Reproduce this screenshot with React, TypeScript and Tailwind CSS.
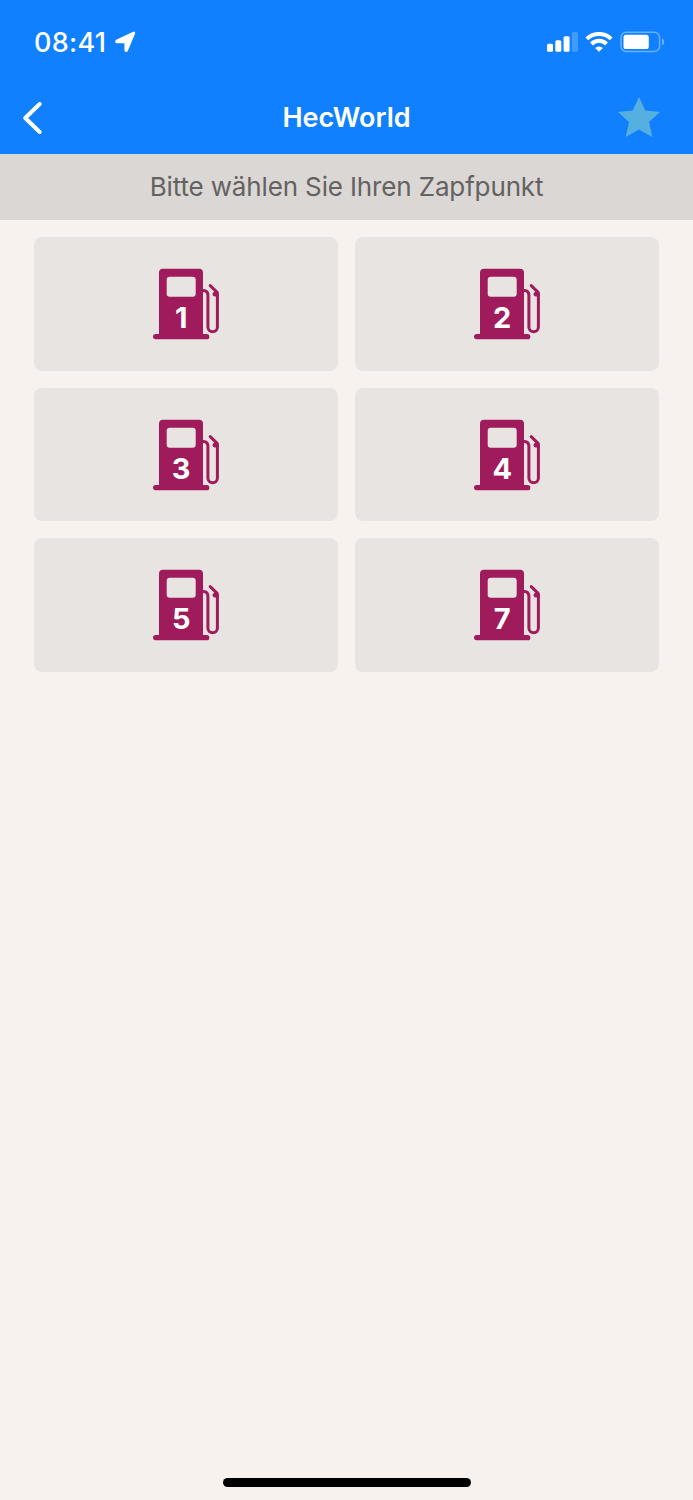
const pumps = [1, 2, 3, 4, 5, 7];

function LocationArrow() {
  return (
    <svg width="22" height="22" viewBox="0 0 22 22" className="ml-[7.5px] fill-white stroke-white" strokeLinejoin="round">
      <path d="M19.800 2L12.600 19.300Q12 20 11.800 19.100V11.200Q11.700 10.800 11.100 10.800H3Q2.100 10.600 2.800 10.100z" strokeWidth="2.800" />
    </svg>
  );
}

function SignalBars() {
  return (
    <svg width="31" height="20" viewBox="0 0 31 20" className="fill-white">
      <rect x="0" y="11.700" width="6" height="8" rx="1.500" />
      <rect x="8.300" y="8.200" width="6" height="11.500" rx="1.500" />
      <rect x="16.600" y="4.200" width="6" height="15.500" rx="1.500" />
      <rect x="24.900" y="0" width="6" height="19.700" rx="1.500" fill="#3f9dff" />
    </svg>
  );
}

function Wifi() {
  return (
    <svg width="28" height="20" viewBox="0 0 28 20" className="ml-[7px] fill-none stroke-white">
      <path d="M1.800 6.900a17.500 17.500 0 0 1 24.400 0" strokeWidth="4" />
      <path d="M6.500 12a10.500 10.500 0 0 1 15 0" strokeWidth="4" />
      <path d="M14 19.700l3.900-3.600a5.600 5.600 0 0 0-7.800 0z" fill="white" stroke="none" />
    </svg>
  );
}

function Battery() {
  return (
    <svg width="45" height="22" viewBox="0 0 45 22" className="ml-[7px]">
      <rect x="1" y="1.200" width="38.600" height="19.300" rx="5.300" fill="none" stroke="#69b1ff" strokeWidth="1.500" />
      <rect x="3.500" y="3.800" width="25.300" height="14.200" rx="2.600" fill="white" />
      <path d="M42 7.600c1.500.6 2.200 1.800 2.200 3.300s-.7 2.700-2.200 3.300z" fill="#69b1ff" />
    </svg>
  );
}

function PumpIcon({ label }: { label: number }) {
  return (
    <svg width="67" height="72" viewBox="0 -0.8 67 72">
      <path
        d="M10 0h36a4 4 0 0 1 4 4v61.200h3.700a2.600 2.600 0 0 1 0 5.300H2.600a2.600 2.600 0 0 1 0-5.300H6V4a4 4 0 0 1 4-4z"
        fill="#a01b5c"
      />
      <rect x="13.700" y="8" width="29" height="20" rx="3" fill="#e8e4e1" />
      <path
        d="M49 21.800h1.500c2.900 0 4.400 2.200 4.400 5v31.400a4.750 4.750 0 0 0 9.500 0V25.500"
        fill="none"
        stroke="#a01b5c"
        strokeWidth="3"
      />
      <path d="M57.200 16.800l7 6.800" fill="none" stroke="#a01b5c" strokeWidth="3" strokeLinecap="round" />
      <path d="M61.500 20.600l4.400 3.600v3.600h-4.200a2.400 2.400 0 0 1-1.500-4.100l1.300-1z" fill="#a01b5c" />
      <text
        x="28.200"
        y="59.400"
        textAnchor="middle"
        fill="white"
        className="font-['Inter',sans-serif] text-[29px] font-bold"
      >
        {label}
      </text>
    </svg>
  );
}

export default function App() {
  return (
    <div className="flex h-[1500px] w-[693px] flex-col bg-[#f7f2ee] font-['Inter',sans-serif]">
      <header className="flex h-[154px] flex-col bg-[#1180ff] text-white">
        {/* Status bar */}
        <div className="flex h-[82px] items-center justify-between pl-[34px] pr-[28px] pt-0.5">
          <div className="flex items-center">
            <span className="pt-0.5 text-[27px] font-medium tracking-[0.3px]">08:41</span>
            <LocationArrow />
          </div>
          <div className="flex items-center">
            <SignalBars />
            <Wifi />
            <Battery />
          </div>
        </div>

        {/* Navigation */}
        <div className="grid h-[72px] grid-cols-3 items-center pl-[22px] pr-[33px]">
          <button aria-label="Zurück" className="justify-self-start pb-px">
            <svg width="22" height="34" viewBox="0 0 22 34" fill="none" stroke="white" strokeWidth="4" strokeLinecap="round" strokeLinejoin="round">
              <path d="M17.700 3L3.200 17L17.700 31" />
            </svg>
          </button>
          <h1 className="pl-[11px] text-center text-[27px] font-semibold">HecWorld</h1>
          <button aria-label="Favorit" className="justify-self-end pb-0.5">
            <svg width="42" height="40" viewBox="0 0 42 40" fill="#56b0df">
              <path d="M21 0l6.300 13.500L42 15.100 31 25l3.300 15L21 32.500 7.700 40 11 25 0 15.100l14.700-1.600z" />
            </svg>
          </button>
        </div>
      </header>

      <div className="flex h-[66px] items-center justify-center bg-[#dbd7d4] pb-0.5">
        <p className="text-[26px] tracking-[-0.14px] text-[#636261]">Bitte wählen Sie Ihren Zapfpunkt</p>
      </div>

      <main className="grid grid-cols-2 gap-[17px] px-[34px] pt-[17px]">
        {pumps.map((n) => (
          <button key={n} className="flex h-[133.700px] items-center justify-center rounded-lg bg-[#e8e4e1]">
            <PumpIcon label={n} />
          </button>
        ))}
      </main>

      {/* Home indicator */}
      <div className="mt-auto mb-[13px] h-[9px] w-[248px] self-center rounded-full bg-black" />
    </div>
  );
}
